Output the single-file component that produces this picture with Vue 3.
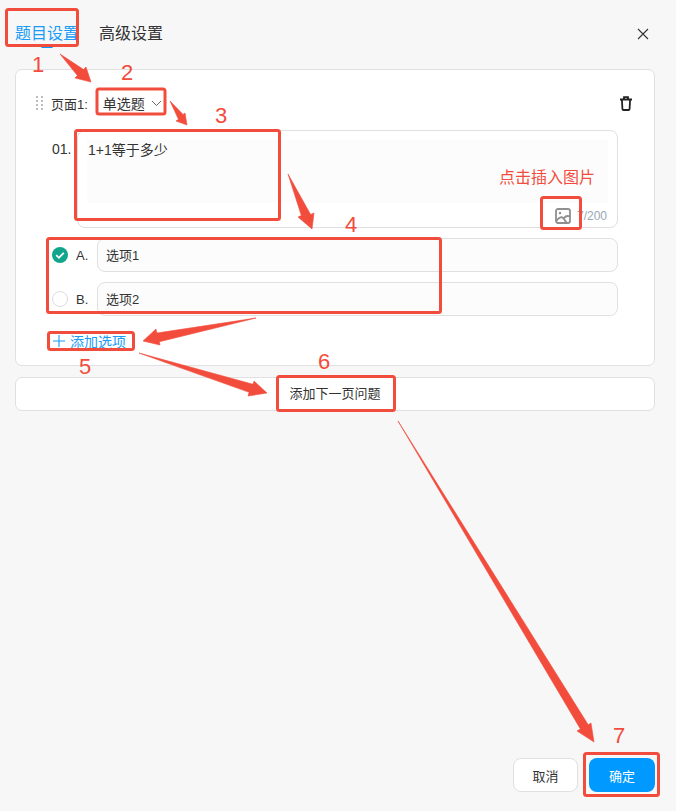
<script setup>
const options = [
  { key: 'A.', text: '选项1', checked: true },
  { key: 'B.', text: '选项2', checked: false },
]
const boxes = [
  [6.5, 9.5, 71, 36], [97, 89, 68, 25], [75.5, 130.5, 204, 89], [47.5, 238.5, 393, 74],
  [48.5, 332.5, 85, 17], [277.5, 376.5, 117, 34], [541.5, 197.5, 39, 31], [584.5, 753.5, 74, 42],
]
const numbers = [
  ['1', 38, 54], ['2', 127, 62], ['3', 221, 105], ['4', 351, 214],
  ['5', 85, 356], ['6', 324, 351], ['7', 619, 725],
]
function arrow(tail, tip, a, b) {
  const inner = (p) => {
    const dx = tip[0] - tail[0], dy = tip[1] - tail[1]
    const t = ((p[0] - tail[0]) * dx + (p[1] - tail[1]) * dy) / (dx * dx + dy * dy)
    const cx = tail[0] + dx * t, cy = tail[1] + dy * t
    return [cx + (p[0] - cx) * 0.55, cy + (p[1] - cy) * 0.55]
  }
  return [tail, inner(a), a, tip, b, inner(b)].map((p) => p.join(',')).join(' ')
}
const arrows = [
  arrow([60, 54], [91, 82], [75, 78], [86, 67]),
  arrow([170, 101], [187, 125], [176, 121], [185, 113]),
  arrow([288, 174], [312, 229], [298, 217], [314, 213]),
  arrow([256, 318], [143, 341], [156, 329], [160, 345]),
  arrow([139, 353], [267, 393], [254, 381], [248, 396]),
  arrow([398, 421], [594, 742], [577, 731], [591, 723]),
]
</script>

<template>
  <div class="page">
    <header class="tabs">
      <span class="tab active">题目设置</span>
      <span class="tab">高级设置</span>
      <svg class="close" width="12" height="12" viewBox="0 0 12 12" fill="none" stroke="#333" stroke-width="1.1">
        <path d="M1 1l10 10M11 1L1 11" />
      </svg>
    </header>

    <section class="card">
      <div class="card-head">
        <svg class="drag" width="7" height="14" viewBox="0 0 7 14" fill="#bdbdbd">
          <rect x="0" y="0" width="2" height="2" /><rect x="5" y="0" width="2" height="2" />
          <rect x="0" y="4" width="2" height="2" /><rect x="5" y="4" width="2" height="2" />
          <rect x="0" y="8" width="2" height="2" /><rect x="5" y="8" width="2" height="2" />
          <rect x="0" y="12" width="2" height="2" /><rect x="5" y="12" width="2" height="2" />
        </svg>
        <span class="page-label">页面1:</span>
        <span class="select">单选题</span>
        <svg class="chevron" width="11" height="7" viewBox="0 0 11 7" fill="none" stroke="#666" stroke-width="1">
          <path d="M1 1l4.500 4.500L10 1" />
        </svg>
        <svg class="trash" width="12" height="15" viewBox="0 0 12 15" fill="none" stroke="#222" stroke-width="1.800">
          <path d="M0 3.500h12M4 3V1.200h4V3M1.900 3.500l.5 9.200c0 .7.500 1.300 1.200 1.300h4.800c.7 0 1.200-.6 1.200-1.300l.5-9.200" />
        </svg>
      </div>

      <div class="question">
        <span class="qno">01.</span>
        <div class="qbox">
          <div class="qtext">1+1等于多少</div>
          <div class="qfoot">
            <svg width="16" height="16" viewBox="0 0 16 16" fill="none" stroke="#8f8f8f" stroke-width="1.800">
              <rect x="1" y="1" width="14" height="14" rx="2" />
              <circle cx="5" cy="5" r="1.200" fill="#8f8f8f" stroke="none" />
              <path d="M1 13.500C4 9 7 8 9 11c1 1.700 2 3 3 4M9 10c1.500-2 3.500-2.500 6-1.500" />
            </svg>
            <span class="count">7/200</span>
          </div>
        </div>
      </div>

      <div class="options">
        <div v-for="o in options" :key="o.key" class="option">
          <svg v-if="o.checked" class="radio" width="16" height="16" viewBox="0 0 16 16">
            <circle cx="8" cy="8" r="8" fill="#0fa68c" />
            <path d="M4.200 8.200l2.700 2.600 4.900-5" fill="none" stroke="#fff" stroke-width="1.800" />
          </svg>
          <span v-else class="radio empty"></span>
          <span class="okey">{{ o.key }}</span>
          <div class="oinput">{{ o.text }}</div>
        </div>
      </div>

      <div class="add">
        <svg width="12" height="12" viewBox="0 0 12 12" stroke="#1a9bf5" stroke-width="1.100">
          <path d="M6 0v12M0 6h12" />
        </svg>
        <span>添加选项</span>
      </div>
    </section>

    <div class="next">添加下一页问题</div>

    <footer class="footer">
      <button class="btn cancel">取消</button>
      <button class="btn ok">确定</button>
    </footer>

    <svg class="marks" width="676" height="811" viewBox="0 0 676 811">
      <rect v-for="(b, i) in boxes" :key="i" :x="b[0]" :y="b[1]" :width="b[2]" :height="b[3]"
        rx="2" fill="none" stroke="#f24c3d" stroke-width="3" />
      <polygon v-for="(p, i) in arrows" :key="'a' + i" :points="p" fill="#f24c3d" stroke="#f24c3d" stroke-width="0.6" />
    </svg>
    <span v-for="n in numbers" :key="n[0]" class="num" :style="{ left: n[1] + 'px', top: n[2] + 'px' }">{{ n[0] }}</span>
    <span class="hint">点击插入图片</span>
  </div>
</template>

<style scoped>
.page {
  position: relative;
  width: 676px;
  height: 811px;
  overflow: hidden;
  display: flex;
  flex-direction: column;
  padding: 0 21px 19px 15px;
  box-sizing: border-box;
  background: #f7f7f7;
  color: #333;
  font-family: "Liberation Sans", "Noto Sans CJK SC", sans-serif;
  font-size: 13px;
}
.tabs {
  height: 69px;
  flex: none;
  display: flex;
  align-items: flex-start;
  gap: 20px;
  padding-top: 24px;
  box-sizing: border-box;
  position: relative;
}
.tab {
  position: relative;
  font-size: 16px;
  line-height: 20px;
}
.tab.active {
  color: #1a9bf5;
}
.tab.active::after {
  content: "";
  position: absolute;
  left: 26px;
  bottom: -4px;
  width: 12px;
  height: 3px;
  border-radius: 2px;
  background: #0099ff;
}
.close {
  margin-left: auto;
  margin-right: 6px;
  margin-top: 4px;
}
.card {
  height: 297px;
  flex: none;
  box-sizing: border-box;
  background: #fff;
  border: 1px solid #e0e0e0;
  border-radius: 7px;
  padding: 0 36px 0 20px;
}
.card-head {
  height: 60px;
  box-sizing: border-box;
  padding-top: 6px;
  display: flex;
  align-items: center;
}
.drag {
  margin-right: 8px;
}
.page-label {
  margin-right: 15px;
}
.select {
  margin-right: 6px;
  font-size: 14px;
}
.trash {
  margin-left: auto;
  margin-right: -14px;
}
.question {
  display: flex;
}
.qno {
  width: 41px;
  flex: none;
  padding: 10px 0 0 16px;
  box-sizing: border-box;
  font-size: 14px;
  line-height: 18px;
}
.qbox {
  flex: 1;
  height: 98px;
  box-sizing: border-box;
  border: 1px solid #e0e0e0;
  border-radius: 8px;
  padding: 9px;
}
.qtext {
  height: 63px;
  background: #fcfcfc;
  line-height: 20px;
  font-size: 14px;
  box-sizing: border-box;
  padding-left: 1px;
}
.qfoot {
  display: flex;
  justify-content: flex-end;
  align-items: center;
  gap: 6px;
  height: 16px;
  margin-top: 5px;
  padding-right: 1px;
}
.count {
  font-size: 12px;
  color: #9aa8b5;
}
.options {
  margin-top: 10px;
  display: flex;
  flex-direction: column;
  gap: 10px;
}
.option {
  display: flex;
  align-items: center;
  padding-left: 16px;
}
.radio {
  width: 16px;
  height: 16px;
  flex: none;
  box-sizing: border-box;
}
.radio.empty {
  border: 1px solid #ddd;
  border-radius: 50%;
}
.okey {
  width: 21px;
  flex: none;
  margin-left: 8px;
  font-size: 13px;
}
.oinput {
  flex: 1;
  height: 34px;
  box-sizing: border-box;
  background: #fcfcfc;
  border: 1px solid #e0e0e0;
  border-radius: 8px;
  padding: 1px 0 0 8px;
  line-height: 32px;
}
.add {
  margin-top: 16px;
  margin-left: 17px;
  display: flex;
  align-items: center;
  gap: 5px;
  color: #1a9bf5;
  height: 18px;
}
.add span {
  font-size: 14px;
}
.next {
  margin-top: 11px;
  height: 34px;
  flex: none;
  box-sizing: border-box;
  background: #fff;
  border: 1px solid #e0e0e0;
  border-radius: 7px;
  text-align: center;
  line-height: 32px;
  font-size: 13px;
}
.footer {
  margin-top: auto;
  display: flex;
  justify-content: flex-end;
  gap: 11px;
}
.btn {
  height: 34px;
  box-sizing: border-box;
  border-radius: 8px;
  font: inherit;
  font-size: 13px;
  padding: 0;
}
.cancel {
  width: 65px;
  background: #fff;
  border: 1px solid #e0e0e0;
  color: #333;
}
.ok {
  width: 66px;
  background: #0099ff;
  border: none;
  color: #fff;
}
.marks {
  position: absolute;
  left: 0;
  top: 0;
  pointer-events: none;
}
.num {
  position: absolute;
  transform: translateX(-50%);
  color: #f24c3d;
  font-size: 22px;
  line-height: 22px;
}
.hint {
  position: absolute;
  left: 499px;
  top: 167px;
  color: #f24c3d;
  font-size: 16px;
  line-height: 22px;
}
</style>
